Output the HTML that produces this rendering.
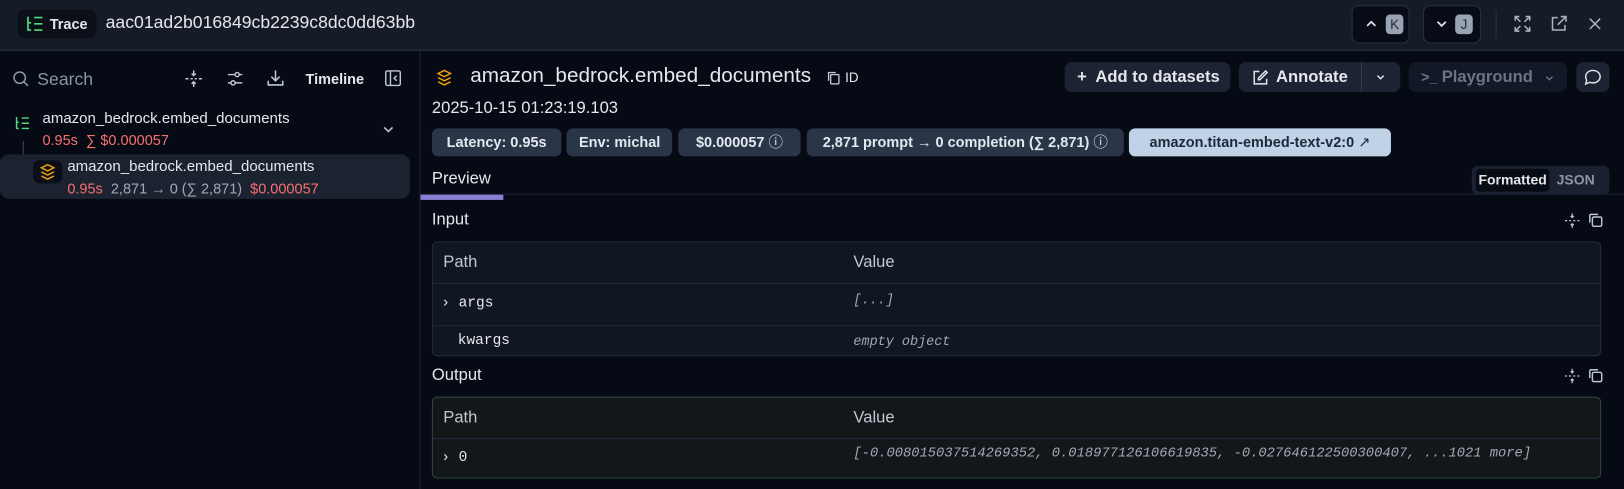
<!DOCTYPE html>
<html><head><meta charset="utf-8"><style>
*{box-sizing:border-box;margin:0;padding:0}
html,body{width:1624px;height:488px;overflow:hidden;background:#050a14}
#w{position:absolute;left:0;top:0;width:1568px;height:472px;transform:scale(1.0357);transform-origin:0 0;font-family:"Liberation Sans",sans-serif;color:#e5e7eb}
.a{position:absolute}
.mono{font-family:"Liberation Mono",monospace}
.pill{position:absolute;top:124px;height:27px;border-radius:6px;background:#2b3548;color:#e2e8f0;font-size:14px;font-weight:bold;line-height:27px;padding:0 12px;white-space:nowrap;text-align:center}
.btn{position:absolute;top:60px;height:29px;border-radius:7px;background:#1c2333;color:#e5e7eb;font-size:16px;font-weight:bold;line-height:29px;white-space:nowrap}
svg{display:block}
.tbl{position:absolute;left:417px;width:1129px;border:1px solid #252b3d;border-radius:5px;background:#111623;overflow:hidden}
.row{position:relative;border-top:1px solid #252b3d}
.hdr{height:39px;font-size:16px;color:#c0c7d3;line-height:39px}
</style></head><body><div id="w">
<!-- top bar -->
<div class="a" style="left:0;top:0;width:1568px;height:49px;background:#151b27;border-bottom:1px solid #2a3345"></div>
<div class="a" style="left:17px;top:9px;width:76px;height:28px;border-radius:7px;background:#0a0f18"></div>
<svg class="a" style="left:25px;top:14px" width="18" height="18" viewBox="0 0 18 18" fill="none" stroke="#4ade80" stroke-width="1.6"><path d="M2 2v13h3M2 8h3M8 3h8M8 9h8M8 15h8"/></svg>
<div class="a" style="left:48px;top:15px;font-size:14px;font-weight:bold;color:#e5e7eb">Trace</div>
<div class="a" style="left:102px;top:12px;font-size:17px;color:#e5e7eb">aac01ad2b016849cb2239c8dc0dd63bb</div>
<div class="a" style="left:1305px;top:5px;width:56px;height:37px;border-radius:7px;background:#080c16;border:1px solid #283043"></div>
<svg class="a" style="left:1318px;top:18px" width="12" height="10" viewBox="0 0 12 10" fill="none" stroke="#e5e7eb" stroke-width="1.6"><path d="M2 7l4-4 4 4"/></svg>
<div class="a" style="left:1338px;top:14px;width:17px;height:19px;border-radius:4px;background:#9aa3b2;color:#1f2937;font-size:13px;text-align:center;line-height:19px">K</div>
<div class="a" style="left:1374px;top:5px;width:56px;height:37px;border-radius:7px;background:#080c16;border:1px solid #283043"></div>
<svg class="a" style="left:1386px;top:18px" width="12" height="10" viewBox="0 0 12 10" fill="none" stroke="#e5e7eb" stroke-width="1.6"><path d="M2 3l4 4 4-4"/></svg>
<div class="a" style="left:1405px;top:14px;width:17px;height:19px;border-radius:4px;background:#9aa3b2;color:#1f2937;font-size:13px;text-align:center;line-height:19px">J</div>
<div class="a" style="left:1444px;top:10px;width:1px;height:27px;background:#2a3345"></div>
<svg class="a" style="left:1461px;top:14px" width="18" height="18" viewBox="0 0 18 18" fill="none" stroke="#aab2c0" stroke-width="1.5"><path d="M2 6V2h4M2 2l5 5M16 6V2h-4M16 2l-5 5M2 12v4h4M2 16l5-5M16 12v4h-4M16 16l-5-5"/></svg>
<svg class="a" style="left:1496px;top:14px" width="18" height="18" viewBox="0 0 18 18" fill="none" stroke="#aab2c0" stroke-width="1.5"><path d="M8 3H3v12h12v-5M11 2h5v5M16 2l-8 8"/></svg>
<svg class="a" style="left:1533px;top:16px" width="14" height="14" viewBox="0 0 14 14" fill="none" stroke="#aab2c0" stroke-width="1.5"><path d="M2 2l10 10M12 2L2 12"/></svg>

<!-- left panel -->
<div class="a" style="left:405px;top:49px;width:1px;height:423px;background:#1e2535"></div>
<svg class="a" style="left:12px;top:68px" width="16" height="16" viewBox="0 0 16 16" fill="none" stroke="#8c95a5" stroke-width="1.5"><circle cx="7" cy="7" r="5.5"/><path d="M11 11l4 4"/></svg>
<div class="a" style="left:36px;top:67px;font-size:17px;color:#8c95a5">Search</div>
<svg class="a" style="left:178px;top:67px" width="18" height="18" viewBox="0 0 18 18" fill="none" stroke="#c0c7d3" stroke-width="1.4"><path d="M9 1v5M7 4l2 2 2-2M9 17v-5M7 14l2-2 2 2M1 9h3M6 9h2M10 9h2M14 9h3" /></svg>
<svg class="a" style="left:218px;top:67px" width="18" height="18" viewBox="0 0 18 18" fill="none" stroke="#c0c7d3" stroke-width="1.4"><path d="M2 5h7M13 5h3M2 13h3M9 13h7"/><circle cx="11" cy="5" r="2"/><circle cx="7" cy="13" r="2"/></svg>
<svg class="a" style="left:257px;top:66px" width="18" height="18" viewBox="0 0 18 18" fill="none" stroke="#c0c7d3" stroke-width="1.5"><path d="M9 2v10M5 8l4 4 4-4M2 12v4h14v-4"/></svg>
<div class="a" style="left:295px;top:68px;font-size:14px;font-weight:bold;color:#e5e7eb">Timeline</div>
<svg class="a" style="left:371px;top:67px" width="17" height="17" viewBox="0 0 17 17" fill="none" stroke="#c0c7d3" stroke-width="1.4"><rect x="1.5" y="1.5" width="14" height="14" rx="1.5"/><path d="M6 1.5v14M12 6l-2.5 2.5L12 11"/></svg>
<svg class="a" style="left:14px;top:112px" width="16" height="14" viewBox="0 0 16 14" fill="none" stroke="#4ade80" stroke-width="1.4"><path d="M2 1v11h2M2 6h2M7 2h7M7 7h7M7 12h7"/></svg>
<div class="a" style="left:41px;top:107px;font-size:14.5px;color:#e5e7eb">amazon_bedrock.embed_documents</div>
<div class="a" style="left:41px;top:127px;font-size:14px;color:#f87171">0.95s &nbsp;∑ $0.000057</div>
<svg class="a" style="left:369px;top:120px" width="12" height="10" viewBox="0 0 12 10" fill="none" stroke="#c0c7d3" stroke-width="1.5"><path d="M2 3l4 4 4-4"/></svg>
<div class="a" style="left:22px;top:136px;width:1px;height:29px;background:#3a4356"></div>
<div class="a" style="left:22px;top:165px;width:11px;height:1px;background:#3a4356"></div>
<div class="a" style="left:0;top:149px;width:396px;height:43px;border-radius:9px;background:#1b2230"></div>
<div class="a" style="left:32px;top:155px;width:28px;height:22px;border-radius:6px;background:#0a0e16"></div>
<svg class="a" style="left:38px;top:157px" width="16" height="17" viewBox="0 0 16 17" fill="none" stroke="#f59e0b" stroke-width="1.4"><path d="M8 2l6 3-6 3-6-3zM2 9l6 3 6-3M2 13l6 3 6-3"/></svg>
<div class="a" style="left:65px;top:153px;font-size:14.5px;color:#e5e7eb">amazon_bedrock.embed_documents</div>
<div class="a" style="left:65px;top:174px;font-size:14px;color:#f87171;white-space:nowrap">0.95s &nbsp;<span style="color:#a0a8b6">2,871 → 0 (∑ 2,871)</span> &nbsp;$0.000057</div>

<!-- right header -->
<svg class="a" style="left:421px;top:66px" width="16" height="17" viewBox="0 0 16 17" fill="none" stroke="#f59e0b" stroke-width="1.4"><path d="M8 2l6 3-6 3-6-3zM2 9l6 3 6-3M2 13l6 3 6-3"/></svg>
<div class="a" style="left:454px;top:62px;font-size:20px;color:#e5e7eb">amazon_bedrock.embed_documents</div>
<svg class="a" style="left:798px;top:68px" width="14" height="14" viewBox="0 0 14 14" fill="none" stroke="#c0c7d3" stroke-width="1.3"><rect x="4" y="4" width="8" height="9" rx="1"/><path d="M2 10V2h7"/></svg>
<div class="a" style="left:816px;top:67px;font-size:13px;color:#e5e7eb">ID</div>
<div class="a" style="left:417px;top:96px;font-size:16px;color:#e5e7eb">2025-10-15 01:23:19.103</div>

<div class="btn" style="left:1028px;width:160px;padding-left:12px">+&nbsp; Add to datasets</div>
<div class="btn" style="left:1196px;width:156px"><svg class="a" style="left:13px;top:7px" width="16" height="16" viewBox="0 0 16 16" fill="none" stroke="#e5e7eb" stroke-width="1.4"><path d="M7 2H2v12h12V9M13 1.5l1.5 1.5-7 7H6V8.5z"/></svg><span class="a" style="left:36px">Annotate</span><div class="a" style="left:118px;top:0;width:1px;height:29px;background:#333c4f"></div><svg class="a" style="left:132px;top:11px" width="10" height="8" viewBox="0 0 10 8" fill="none" stroke="#e5e7eb" stroke-width="1.4"><path d="M2 2l3 3 3-3"/></svg></div>
<div class="btn" style="left:1360px;width:153px;background:#121826;color:#6b7384"><span class="a" style="left:12px;font-size:14px">&gt;_</span><span class="a" style="left:32px">Playground</span><svg class="a" style="left:131px;top:12px" width="10" height="8" viewBox="0 0 10 8" fill="none" stroke="#6b7384" stroke-width="1.3"><path d="M2 2l3 3 3-3"/></svg></div>
<div class="btn" style="left:1522px;width:32px"><svg class="a" style="left:7px;top:6px" width="18" height="17" viewBox="0 0 18 17" fill="none" stroke="#e5e7eb" stroke-width="1.4"><path d="M9 2c4 0 7 2.7 7 6s-3 6-7 6c-1 0-2-.2-3-.5L2 15l1-3.5C2.4 10.5 2 9.3 2 8c0-3.3 3-6 7-6z"/></svg></div>

<div class="pill" style="left:417px;width:125px">Latency: 0.95s</div>
<div class="pill" style="left:547px;width:102px">Env: michal</div>
<div class="pill" style="left:655px;width:118px">$0.000057 <span style="font-weight:normal">ⓘ</span></div>
<div class="pill" style="left:779px;width:306px">2,871 prompt → 0 completion (∑ 2,871) <span style="font-weight:normal">ⓘ</span></div>
<div class="pill" style="left:1090px;width:253px;background:#bfd2e6;color:#1e293b">amazon.titan-embed-text-v2:0 <span style="font-weight:normal">↗</span></div>

<div class="a" style="left:417px;top:164px;font-size:16px;color:#e5e7eb">Preview</div>
<div class="a" style="left:406px;top:187px;width:1164px;height:1px;background:#1e2535"></div>
<div class="a" style="left:406px;top:188px;width:80px;height:5px;background:#8b7fd6"></div>
<div class="a" style="left:1421px;top:160px;width:133px;height:28px;border-radius:6px;background:#1a2130"></div>
<div class="a" style="left:1425px;top:163px;width:71px;height:22px;border-radius:4px;background:#070b14;color:#e5e7eb;font-size:13.5px;font-weight:bold;line-height:22px;text-align:center">Formatted</div>
<div class="a" style="left:1503px;top:163px;font-size:13.5px;font-weight:bold;color:#8c95a5;line-height:22px">JSON</div>

<div class="a" style="left:417px;top:204px;font-size:16px;color:#e5e7eb">Input</div>
<div class="a" style="left:417px;top:354px;font-size:16px;color:#e5e7eb">Output</div>
<svg class="a" style="left:1510px;top:205px" width="16" height="16" viewBox="0 0 16 16" fill="none" stroke="#c0c7d3" stroke-width="1.2"><path d="M8 1v4M6.5 3.5L8 5l1.5-1.5M8 15v-4M6.5 12.5L8 11l1.5 1.5M1 8h2M5 8h2M9 8h2M13 8h2"/></svg>
<svg class="a" style="left:1533px;top:205px" width="15" height="15" viewBox="0 0 15 15" fill="none" stroke="#c0c7d3" stroke-width="1.4"><rect x="4.5" y="4.5" width="9" height="9" rx="1.5"/><path d="M2 10V3a1 1 0 011-1h7"/></svg>
<svg class="a" style="left:1510px;top:355px" width="16" height="16" viewBox="0 0 16 16" fill="none" stroke="#c0c7d3" stroke-width="1.2"><path d="M8 1v4M6.5 3.5L8 5l1.5-1.5M8 15v-4M6.5 12.5L8 11l1.5 1.5M1 8h2M5 8h2M9 8h2M13 8h2"/></svg>
<svg class="a" style="left:1533px;top:355px" width="15" height="15" viewBox="0 0 15 15" fill="none" stroke="#c0c7d3" stroke-width="1.4"><rect x="4.5" y="4.5" width="9" height="9" rx="1.5"/><path d="M2 10V3a1 1 0 011-1h7"/></svg>

<div class="tbl" style="top:233px;height:111px">
 <div class="hdr"><span class="a" style="left:10px">Path</span><span class="a" style="left:406px">Value</span></div>
 <div class="row" style="height:41px"><span class="a mono" style="left:8px;top:11px;font-size:14px;color:#e5e7eb">› args</span><span class="a mono" style="left:406px;top:8px;font-size:13px;font-style:italic;color:#a0a8b6">[...]</span></div>
 <div class="row" style="height:31px"><span class="a mono" style="left:24px;top:6px;font-size:14px;color:#e5e7eb">kwargs</span><span class="a mono" style="left:406px;top:7px;font-size:13px;font-style:italic;color:#a0a8b6">empty object</span></div>
</div>
<div class="tbl" style="top:383px;height:79px;background:#131719;border-color:#2d4a37">
 <div class="hdr"><span class="a" style="left:10px">Path</span><span class="a" style="left:406px">Value</span></div>
 <div class="row" style="height:40px"><span class="a mono" style="left:8px;top:10px;font-size:14px;color:#e5e7eb">› 0</span><span class="a mono" style="left:406px;top:6px;font-size:13.3px;font-style:italic;color:#a0a8b6;white-space:nowrap">[-0.008015037514269352, 0.018977126106619835, -0.027646122500300407, ...1021 more]</span></div>
</div>
</div></body></html>
